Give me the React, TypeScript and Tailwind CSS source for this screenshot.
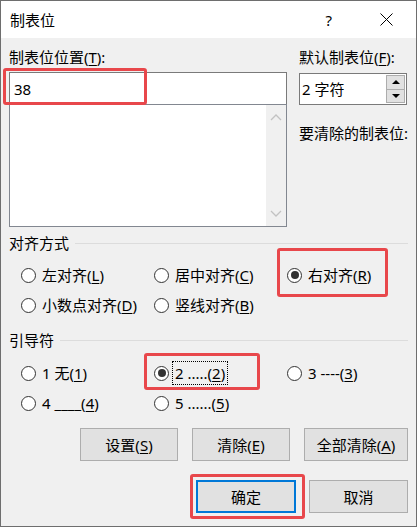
import type { ReactNode } from "react";

const FONT = "font-['Noto_Sans','Noto_Sans_CJK_SC',sans-serif]";

function Key({ children }: { children: ReactNode }) {
  return <span className="underline underline-offset-2">{children}</span>;
}

function Radio({ checked = false, children }: { checked?: boolean; children: ReactNode }) {
  return (
    <div className="flex h-[30px] items-center">
      <span className="flex h-[15px] w-[15px] shrink-0 items-center justify-center rounded-full border border-[#333333] bg-white">
        {checked ? <span className="h-[8px] w-[8px] rounded-full bg-[#333333]" /> : null}
      </span>
      <span className="ml-[6px] whitespace-nowrap leading-[22px]">{children}</span>
    </div>
  );
}

function SectionTitle({ children }: { children: ReactNode }) {
  return (
    <div className="flex h-[22px] items-center">
      <span className="leading-[22px]">{children}</span>
      <span className="ml-[6px] h-px flex-1 bg-[#dcdcdc]" />
    </div>
  );
}

function Chevron({ up }: { up?: boolean }) {
  return (
    <svg width="12" height="8" viewBox="0 0 12 8" className="block">
      <polyline
        points={up ? "1,7 6,2 11,7" : "1,1 6,6 11,1"}
        fill="none"
        stroke="#c2c2c2"
        strokeWidth="1.3"
      />
    </svg>
  );
}

function DialogButton({ children, width, focused = false }: { children: ReactNode; width: string; focused?: boolean }) {
  return (
    <div
      className={`flex h-[33px] items-center justify-center bg-[#e1e1e1] ${width} ${
        focused ? "border-2 border-[#0078d7]" : "border border-[#adadad]"
      }`}
    >
      <span className="leading-[22px]">{children}</span>
    </div>
  );
}

export default function App() {
  return (
    <div className={`flex h-[527px] w-[417px] flex-col border border-[#6e6e6e] text-[15px] text-black ${FONT}`}>
      {/* title bar */}
      <div className="flex h-[37px] shrink-0 items-center bg-white pl-[9px]">
        <span className="leading-[22px]">制表位</span>
        <span className="ml-auto mr-[48px] leading-[22px]">?</span>
        <svg width="13" height="13" viewBox="0 0 13 13" className="mr-[23px]">
          <path d="M0.5 0.5 L12.5 12.5 M12.5 0.5 L0.5 12.5" stroke="#000" strokeWidth="1" />
        </svg>
      </div>

      <div className="flex flex-1 flex-col bg-[#f0f0f0] px-[8px] pt-[8px]">
        {/* tab stops */}
        <div className="flex">
          <div className="relative w-[278px]">
            <div className="h-[26px] leading-[22px]">
              制表位位置(<Key>T</Key>):
            </div>
            <div className="flex h-[32px] items-center border-x border-t border-[#7a7a7a] bg-white pl-[4px]">
              <span className="leading-[22px]">38</span>
            </div>
            <div className="flex h-[123px] border border-[#828790] bg-white">
              <div className="flex-1" />
              <div className="flex w-[20px] flex-col items-center justify-between bg-[#f0f0f0] py-[8px]">
                <Chevron up />
                <Chevron />
              </div>
            </div>
            <div className="pointer-events-none absolute left-[-6px] top-[22px] h-[37px] w-[144px] rounded-[3px] border-[3px] border-[#e8474b]" />
          </div>

          <div className="ml-[12px] w-[108px]">
            <div className="h-[27px] whitespace-nowrap leading-[22px]">
              默认制表位(<Key>F</Key>):
            </div>
            <div className="flex h-[32px] items-center border border-[#7a7a7a] bg-white pl-[2px]">
              <span className="flex-1 leading-[22px]">2 字符</span>
              <div className="mr-px flex h-[28px] w-[19px] flex-col">
                <div className="flex flex-1 items-center justify-center border border-[#adadad] bg-[#e1e1e1]">
                  <span className="h-0 w-0 border-x-[4px] border-b-[4px] border-x-transparent border-b-black" />
                </div>
                <div className="flex flex-1 items-center justify-center border border-t-0 border-[#adadad] bg-[#e1e1e1]">
                  <span className="h-0 w-0 border-x-[4px] border-t-[4px] border-x-transparent border-t-black" />
                </div>
              </div>
            </div>
            <div className="mt-[17px] whitespace-nowrap leading-[22px]">要清除的制表位:</div>
          </div>
        </div>

        {/* alignment */}
        <div className="mt-[5px]">
          <SectionTitle>对齐方式</SectionTitle>
        </div>
        <div className="relative mt-[6px] grid grid-cols-[133px_133px_133px] pl-[12px]">
          <Radio>
            左对齐(<Key>L</Key>)
          </Radio>
          <Radio>
            居中对齐(<Key>C</Key>)
          </Radio>
          <Radio checked>
            右对齐(<Key>R</Key>)
          </Radio>
          <Radio>
            小数点对齐(<Key>D</Key>)
          </Radio>
          <Radio>
            竖线对齐(<Key>B</Key>)
          </Radio>
          <div className="pointer-events-none absolute left-[268px] top-[-12px] h-[49px] w-[111px] rounded-[3px] border-[3px] border-[#e8474b]" />
        </div>

        {/* leader */}
        <div className="mt-[9px]">
          <SectionTitle>引导符</SectionTitle>
        </div>
        <div className="relative mt-[7px] grid grid-cols-[133px_133px_133px] pl-[12px]">
          <Radio>
            1 无(<Key>1</Key>)
          </Radio>
          <div className="flex h-[30px] items-center">
            <span className="flex h-[15px] w-[15px] shrink-0 items-center justify-center rounded-full border border-[#333333] bg-white">
              <span className="h-[8px] w-[8px] rounded-full bg-[#333333]" />
            </span>
            <span className="ml-[3px] whitespace-nowrap border border-dotted border-black px-[2px] leading-[22px]">
              2 .....(<Key>2</Key>)
            </span>
          </div>
          <Radio>
            3 ----(<Key>3</Key>)
          </Radio>
          <Radio>
            4 ____(<Key>4</Key>)
          </Radio>
          <Radio>
            5 ......(<Key>5</Key>)
          </Radio>
          <div className="pointer-events-none absolute left-[135px] top-[-5px] h-[37px] w-[116px] rounded-[3px] border-[3px] border-[#e8474b]" />
        </div>

        {/* actions */}
        <div className="mt-[10px] flex justify-end gap-[14px]">
          <DialogButton width="w-[98px]">
            设置(<Key>S</Key>)
          </DialogButton>
          <DialogButton width="w-[98px]">
            清除(<Key>E</Key>)
          </DialogButton>
          <DialogButton width="w-[104px]">
            全部清除(<Key>A</Key>)
          </DialogButton>
        </div>

        <div className="mt-[19px] flex justify-end gap-[13px]">
          <div className="relative">
            <DialogButton width="w-[100px]" focused>
              确定
            </DialogButton>
            <div className="pointer-events-none absolute left-[-6px] top-[-6px] h-[45px] w-[115px] rounded-[3px] border-[3px] border-[#e8474b]" />
          </div>
          <DialogButton width="w-[99px]">取消</DialogButton>
        </div>
      </div>
    </div>
  );
}
